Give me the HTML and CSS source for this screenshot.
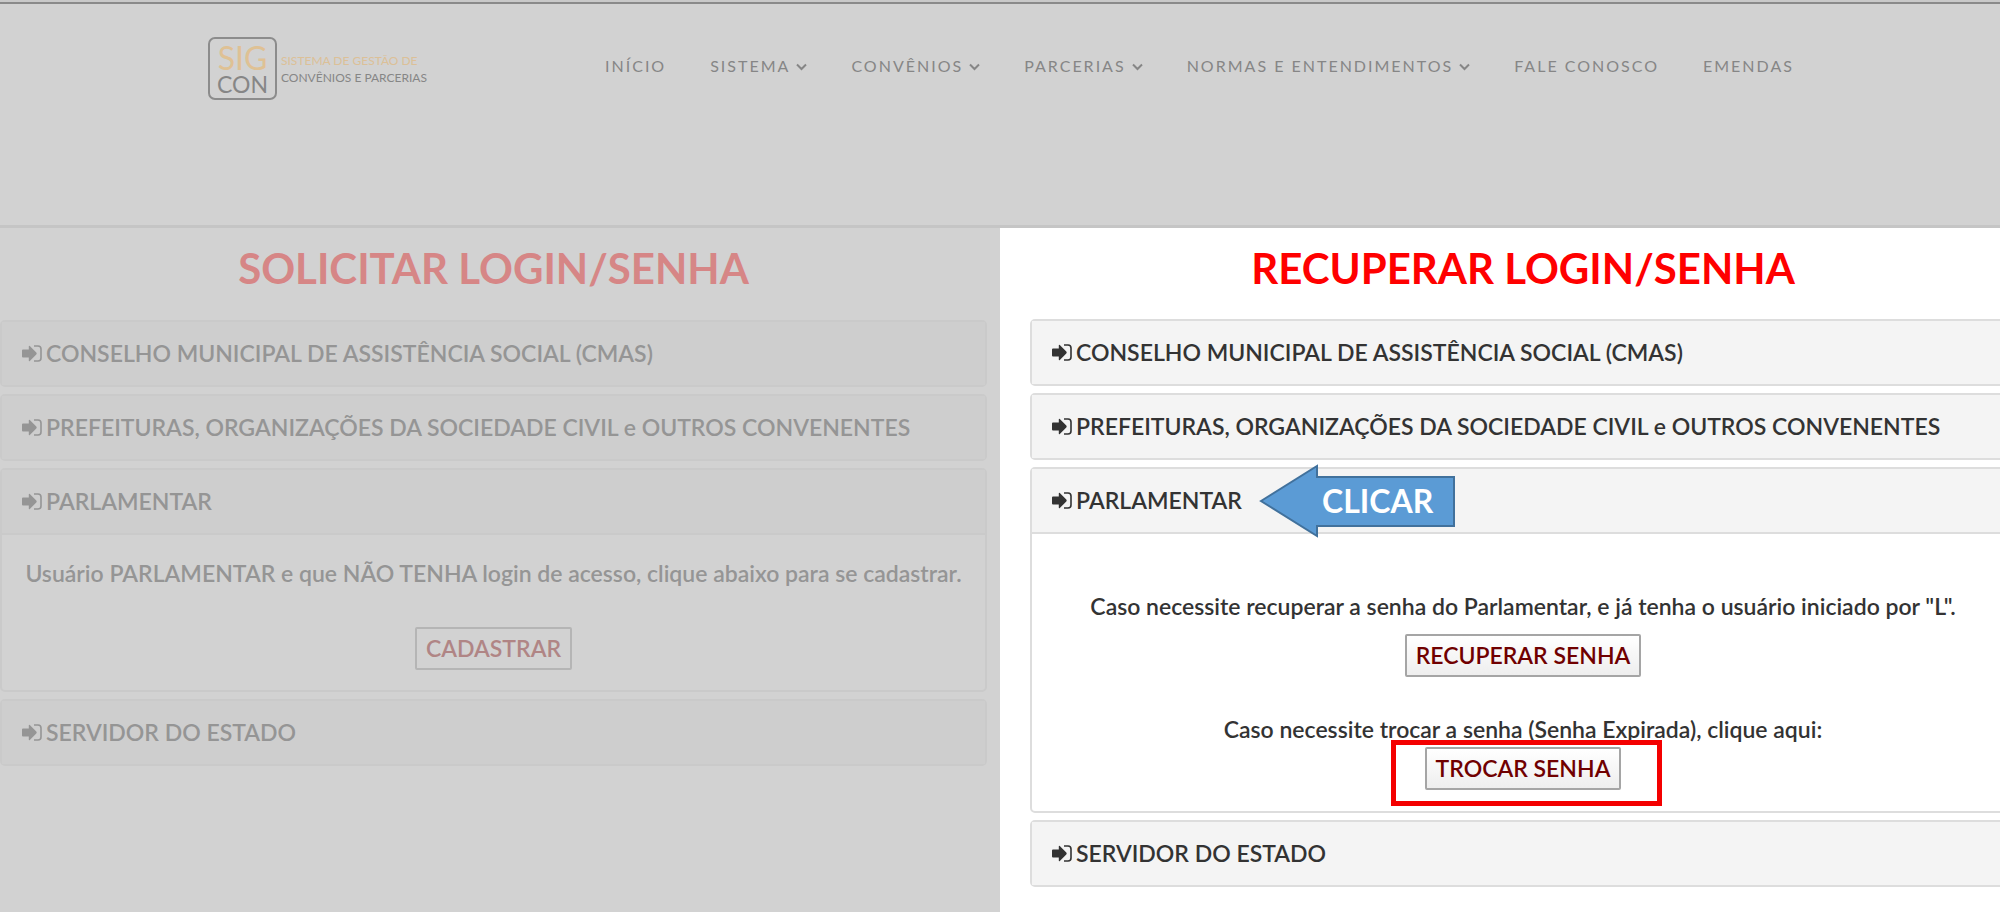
FILE: index.html
```html
<!DOCTYPE html>
<html lang="pt-BR">
<head>
<meta charset="utf-8">
<title>SIGCON - Login e Senha</title>
<link rel="stylesheet" href="styles.css">
</head>
<body>
<svg class="defs" aria-hidden="true">
  <symbol id="signin" viewBox="0 0 20 17">
    <path fill="currentColor" d="M1 4.500h5.800V1.500q0-1.300 1-.4l6.500 6.400q.9 1 0 2l-6.500 6.400q-1 .9-1-.4V12.500H1q-1 0-1-1v-6q0-1 1-1z"/>
    <path fill="none" stroke="currentColor" stroke-width="1.600" d="M12 1h4q3 0 3 3v9q0 3-3 3h-4"/>
  </symbol>
  <symbol id="chevron" viewBox="0 0 11 8">
    <path fill="none" stroke="currentColor" stroke-width="2" d="M1 1.500L5.500 6 10 1.500"/>
  </symbol>
</svg>
<header class="header">
  <a class="logo" href="#" aria-label="SIGCON">
    <span class="logo-mark"><span class="logo-sig">SIG</span><span class="logo-con">CON</span></span>
    <span class="logo-text"><span class="gold">SISTEMA DE GESTÃO DE</span><span>CONVÊNIOS E PARCERIAS</span></span>
  </a>
  <nav class="nav">
    <a href="#">INÍCIO</a>
    <a href="#">SISTEMA<svg class="chev"><use href="#chevron"/></svg></a>
    <a href="#">CONVÊNIOS<svg class="chev"><use href="#chevron"/></svg></a>
    <a href="#">PARCERIAS<svg class="chev"><use href="#chevron"/></svg></a>
    <a href="#">NORMAS E ENTENDIMENTOS<svg class="chev"><use href="#chevron"/></svg></a>
    <a href="#">FALE CONOSCO</a>
    <a href="#">EMENDAS</a>
  </nav>
</header>
<main class="main">
  <section class="column dimmed">
    <h1 class="title">SOLICITAR LOGIN/SENHA</h1>
    <div class="accordion">
      <div class="panel"><button class="panel-head"><svg class="icon"><use href="#signin"/></svg>CONSELHO MUNICIPAL DE ASSISTÊNCIA SOCIAL (CMAS)</button></div>
      <div class="panel"><button class="panel-head"><svg class="icon"><use href="#signin"/></svg>PREFEITURAS, ORGANIZAÇÕES DA SOCIEDADE CIVIL e OUTROS CONVENENTES</button></div>
      <div class="panel">
        <button class="panel-head"><svg class="icon"><use href="#signin"/></svg>PARLAMENTAR</button>
        <div class="panel-body register">
          <p>Usuário PARLAMENTAR e que NÃO TENHA login de acesso, clique abaixo para se cadastrar.</p>
          <button class="action">CADASTRAR</button>
        </div>
      </div>
      <div class="panel"><button class="panel-head"><svg class="icon"><use href="#signin"/></svg>SERVIDOR DO ESTADO</button></div>
    </div>
  </section>
  <section class="column active">
    <h1 class="title">RECUPERAR LOGIN/SENHA</h1>
    <div class="accordion">
      <div class="panel"><button class="panel-head"><svg class="icon"><use href="#signin"/></svg>CONSELHO MUNICIPAL DE ASSISTÊNCIA SOCIAL (CMAS)</button></div>
      <div class="panel"><button class="panel-head"><svg class="icon"><use href="#signin"/></svg>PREFEITURAS, ORGANIZAÇÕES DA SOCIEDADE CIVIL e OUTROS CONVENENTES</button></div>
      <div class="panel">
        <button class="panel-head"><svg class="icon"><use href="#signin"/></svg>PARLAMENTAR</button>
        <div class="callout">
          <svg viewBox="0 0 197 74"><path fill="#5b9bd5" stroke="#41719c" stroke-width="2" d="M2 37L58 2v11h137v49H58v10z"/></svg>
          <span>CLICAR</span>
        </div>
        <div class="panel-body recover">
          <div class="option">
            <p>Caso necessite recuperar a senha do Parlamentar, e já tenha o usuário iniciado por "L".</p>
            <button class="action">RECUPERAR SENHA</button>
          </div>
          <div class="option">
            <p>Caso necessite trocar a senha (Senha Expirada), clique aqui:</p>
            <div class="marked"><button class="action">TROCAR SENHA</button><span class="frame"></span></div>
          </div>
        </div>
      </div>
      <div class="panel"><button class="panel-head"><svg class="icon"><use href="#signin"/></svg>SERVIDOR DO ESTADO</button></div>
    </div>
  </section>
</main>
</body>
</html>
```
FILE: styles.css
```css
* { box-sizing: border-box; }
body {
  margin: 0;
  min-height: 100vh;
  display: flex;
  flex-direction: column;
  overflow-x: hidden;
  background: #d2d2d2;
  font-family: Lato, "Open Sans", sans-serif;
  border-top: 2px solid #c9c9c9;
}
h1, p { margin: 0; }
a { color: inherit; text-decoration: none; }
button { font: inherit; color: inherit; cursor: pointer; }
.defs { position: absolute; width: 0; height: 0; }

.header {
  display: flex;
  align-items: flex-start;
  gap: 178px;
  min-height: 226px;
  padding: 33px 0 0 208px;
  border-top: 2px solid #8a8a8a;
  border-bottom: 3px solid #c5c5c5;
  color: #868686;
}
.logo { display: flex; align-items: center; gap: 4px; }
.logo-mark {
  display: flex;
  flex-direction: column;
  align-items: center;
  width: 69px;
  height: 63px;
  padding-top: 5px;
  border: 2px solid #8c8c8c;
  border-radius: 7px;
}
.logo-sig { color: #dfc194; font-size: 32px; line-height: 28px; }
.logo-con { font-size: 23px; line-height: 24px; }
.logo-text {
  display: flex;
  flex-direction: column;
  font-size: 12px;
  line-height: 17px;
  white-space: nowrap;
}
.gold { color: #dcc097; }
.nav {
  display: flex;
  gap: 44px;
  padding-top: 17px;
  font-size: 16px;
  line-height: 24px;
  letter-spacing: 2px;
  white-space: nowrap;
}
.chev { width: 11px; height: 8px; margin-left: 6px; vertical-align: 1px; }

.main { flex: 1; display: grid; grid-template-columns: 1fr 1fr; }
.column { padding-top: 14px; }
.dimmed {
  --text: #959595;
  --line: #cacaca;
  --head: #cecece;
  --title: #d68686;
  --action: #b08585;
  --action-line: #b5b5b5;
  --action-fill: #d2d2d2;
  padding-right: 13px;
  color: var(--text);
}
.active {
  --text: #333;
  --line: #ddd;
  --head: #f4f4f4;
  --title: #f00;
  --action: #700000;
  --action-line: #a5a5a5;
  --action-fill: linear-gradient(#fff, #eee);
  margin-right: -16px;
  padding-left: 30px;
  background: #fff;
  color: var(--text);
}
.title {
  color: var(--title);
  font-size: 42px;
  line-height: 52px;
  font-weight: 700;
  text-align: center;
}
.accordion { display: grid; gap: 7px; margin-top: 26px; }
.active .accordion { margin-top: 25px; }
.panel { position: relative; border: 2px solid var(--line); border-radius: 5px; }
.panel-head {
  display: flex;
  align-items: center;
  gap: 4px;
  width: 100%;
  padding: 18px 20px;
  border: 0;
  background: var(--head);
  color: var(--text);
  font-size: 23px;
  line-height: 27px;
  font-weight: 600;
  white-space: nowrap;
}
.icon { width: 20px; height: 17px; }
.panel-body {
  border-top: 2px solid var(--line);
  font-size: 23px;
  line-height: 28px;
  font-weight: 600;
  text-align: center;
}
.register { padding: 24px 0 20px; }
.register p { margin-bottom: 40px; }
.recover { display: grid; gap: 38px; padding: 58px 0 21px; }
.option { display: grid; gap: 14px; justify-items: center; }
.option + .option { gap: 4px; }
.action {
  padding: 6px 9px;
  border: 2px solid var(--action-line);
  border-radius: 2px;
  background: var(--action-fill);
  color: var(--action);
  line-height: 27px;
}
.marked { position: relative; }
.frame {
  position: absolute;
  inset: -7px -41px -16px -34px;
  border: 5px solid #f40000;
  pointer-events: none;
}
.callout {
  position: absolute;
  top: -5px;
  left: 227px;
  width: 197px;
  height: 74px;
  color: #fff;
  font-size: 32px;
  line-height: 74px;
  font-weight: 700;
}
.callout svg { display: block; width: 100%; height: 100%; }
.callout span { position: absolute; top: 0; left: 63px; }
```
